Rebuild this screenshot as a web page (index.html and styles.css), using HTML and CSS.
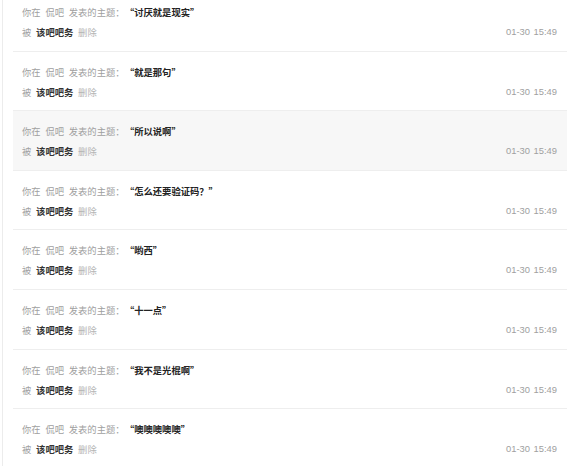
FILE: index.html
```html
<!DOCTYPE html>
<html lang="zh-CN">
<head>
<meta charset="utf-8">
<link rel="stylesheet" href="styles.css">
</head>
<body>
<div class="page">
  <div class="row">
    <div class="line"><span class="muted">你在 侃吧 发表的主题：</span><span class="title">“讨厌就是现实”</span></div>
    <div class="line meta"><span><span class="muted">被 </span><span class="who">该吧吧务</span><span class="del"> 删除</span></span><span class="time">01-30 15:49</span></div>
  </div>
  <div class="row">
    <div class="line"><span class="muted">你在 侃吧 发表的主题：</span><span class="title">“就是那句”</span></div>
    <div class="line meta"><span><span class="muted">被 </span><span class="who">该吧吧务</span><span class="del"> 删除</span></span><span class="time">01-30 15:49</span></div>
  </div>
  <div class="row active">
    <div class="line"><span class="muted">你在 侃吧 发表的主题：</span><span class="title">“所以说啊”</span></div>
    <div class="line meta"><span><span class="muted">被 </span><span class="who">该吧吧务</span><span class="del"> 删除</span></span><span class="time">01-30 15:49</span></div>
  </div>
  <div class="row">
    <div class="line"><span class="muted">你在 侃吧 发表的主题：</span><span class="title">“怎么还要验证码？”</span></div>
    <div class="line meta"><span><span class="muted">被 </span><span class="who">该吧吧务</span><span class="del"> 删除</span></span><span class="time">01-30 15:49</span></div>
  </div>
  <div class="row">
    <div class="line"><span class="muted">你在 侃吧 发表的主题：</span><span class="title">“哟西”</span></div>
    <div class="line meta"><span><span class="muted">被 </span><span class="who">该吧吧务</span><span class="del"> 删除</span></span><span class="time">01-30 15:49</span></div>
  </div>
  <div class="row">
    <div class="line"><span class="muted">你在 侃吧 发表的主题：</span><span class="title">“十一点”</span></div>
    <div class="line meta"><span><span class="muted">被 </span><span class="who">该吧吧务</span><span class="del"> 删除</span></span><span class="time">01-30 15:49</span></div>
  </div>
  <div class="row">
    <div class="line"><span class="muted">你在 侃吧 发表的主题：</span><span class="title">“我不是光棍啊”</span></div>
    <div class="line meta"><span><span class="muted">被 </span><span class="who">该吧吧务</span><span class="del"> 删除</span></span><span class="time">01-30 15:49</span></div>
  </div>
  <div class="row">
    <div class="line"><span class="muted">你在 侃吧 发表的主题：</span><span class="title">“噢噢噢噢噢”</span></div>
    <div class="line meta"><span><span class="muted">被 </span><span class="who">该吧吧务</span><span class="del"> 删除</span></span><span class="time">01-30 15:49</span></div>
  </div>
</div>
</body>
</html>
```

FILE: styles.css
```css
html, body {
  margin: 0;
  padding: 0;
  background: #fff;
  overflow: hidden;
}
body {
  font-family: "Noto Sans CJK SC", "Liberation Sans", sans-serif;
  font-size: 9.3px;
  color: #999;
}
.page {
  margin: -8px 0 0 2px;
  border-left: 1px solid #ececec;
  padding: 0 12px 0 10px;
  min-height: 480px;
}
.row {
  box-sizing: border-box;
  height: 59.6px;
  padding: 10px 10px 0 9px;
  border-bottom: 1px solid #eeeeee;
}
.row.active {
  background: #f7f7f7;
}
.line {
  line-height: 20px;
  white-space: nowrap;
  word-spacing: 2.7px;
}
.meta {
  display: flex;
  justify-content: space-between;
}
.muted {
  color: #a0a0a0;
}
.title {
  margin-left: 5px;
  color: #222;
  font-weight: bold;
}
.who {
  color: #333;
  font-weight: bold;
}
.del {
  color: #b4b4b4;
}
.time {
  font-family: "Liberation Sans", sans-serif;
  font-size: 9.4px;
  word-spacing: 1px;
  color: #a0a0a0;
}
```
